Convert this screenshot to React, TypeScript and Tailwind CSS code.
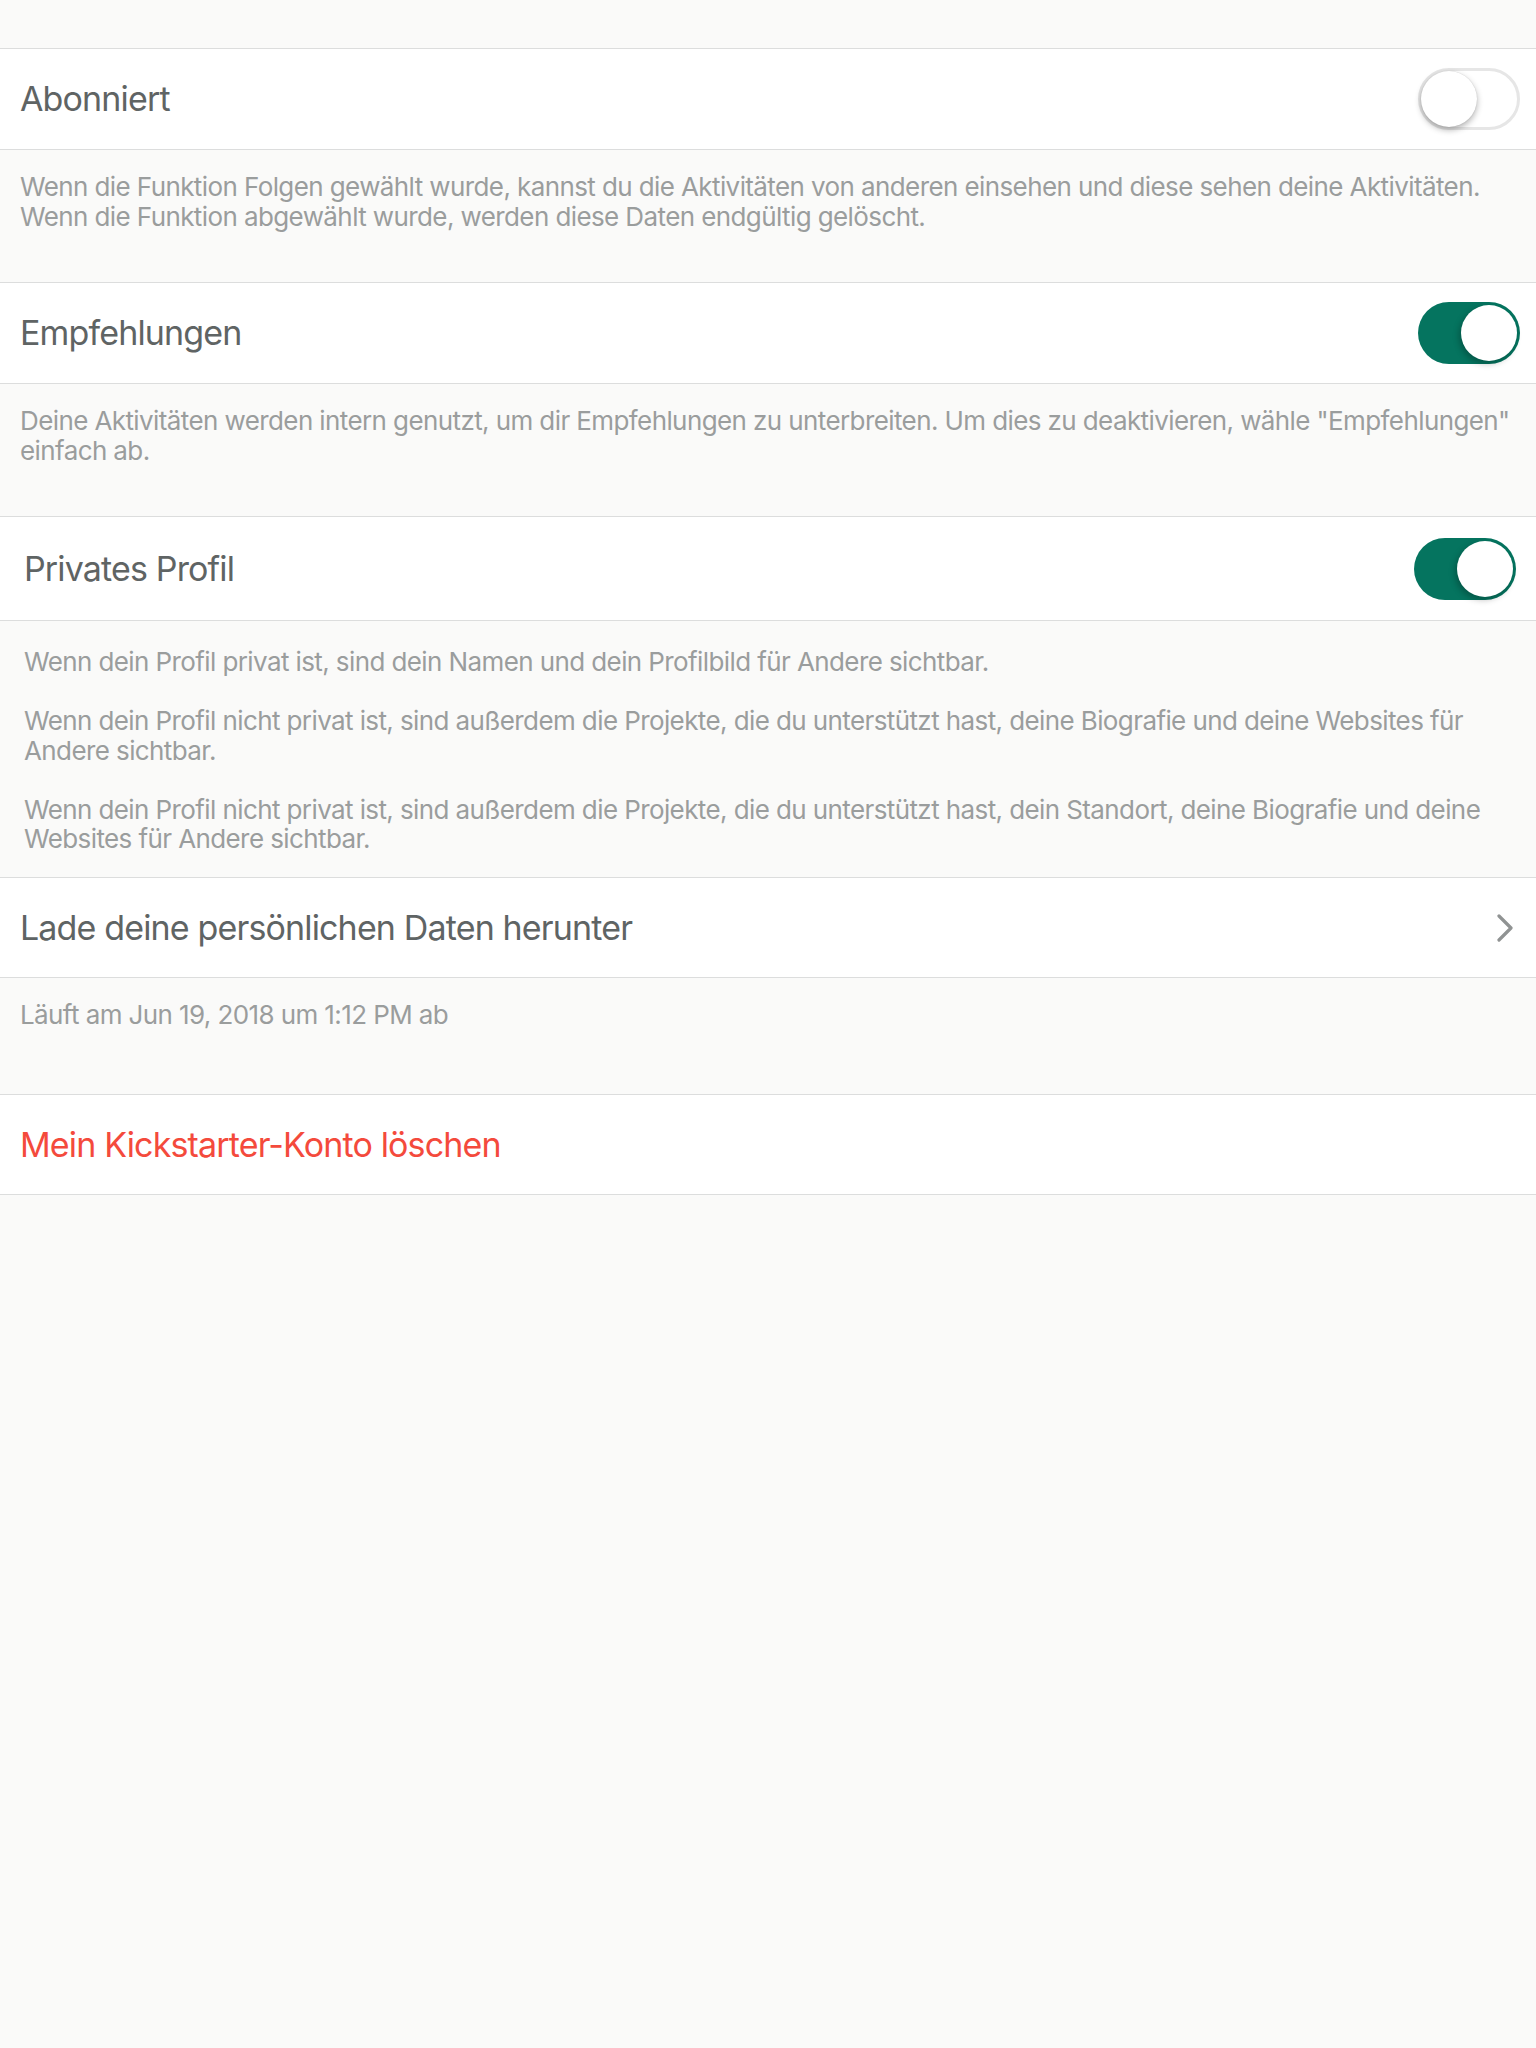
import React from 'react';

const font = { fontFamily: 'Inter, "Noto Sans", sans-serif' };

function Toggle({ on }: { on: boolean }) {
  if (on) {
    return (
      <div className="relative h-[62px] w-[102px] shrink-0 rounded-full bg-[#05745f]">
        <div className="absolute right-[3px] top-[3px] h-[56px] w-[56px] rounded-full bg-white shadow-[-2px_3px_6px_rgba(0,0,0,0.25)]" />
      </div>
    );
  }
  return (
    <div className="relative h-[62px] w-[102px] shrink-0 rounded-full border-[3px] border-[#e6e6e6] bg-white">
      <div className="absolute left-0 top-0 h-[56px] w-[56px] rounded-full bg-white shadow-[0_3px_6px_rgba(0,0,0,0.3),0_0_1px_rgba(0,0,0,0.2)]" />
    </div>
  );
}

function Row({
  title,
  children,
  className = '',
  red = false,
}: {
  title: string;
  children?: React.ReactNode;
  className?: string;
  red?: boolean;
}) {
  return (
    <div
      className={`flex items-center justify-between border-y border-[#dcdddd] bg-white ${className}`}
    >
      <span
        className={`text-[34px] leading-none tracking-[-0.85px] ${
          red ? 'text-[#f44a3c]' : 'text-[#5f6464]'
        }`}
      >
        {title}
      </span>
      {children}
    </div>
  );
}

const desc = 'text-[26px] leading-[29.5px] tracking-[-0.6px] text-[#9a9d9d]';

export default function App() {
  return (
    <div className="min-h-[2048px] w-full bg-[#fafaf9]" style={font}>
      <div className="h-[48px]" />

      {/* Abonniert */}
      <Row title="Abonniert" className="h-[102px] pl-[20px] pr-[16px]">
        <Toggle on={false} />
      </Row>
      <div className={`h-[132px] pl-[20px] pr-[16px] pt-[22px] ${desc}`}>
        <p>
          Wenn die Funktion Folgen gewählt wurde, kannst du die Aktivitäten von anderen einsehen und diese sehen deine Aktivitäten.
        </p>
        <p>Wenn die Funktion abgewählt wurde, werden diese Daten endgültig gelöscht.</p>
      </div>

      {/* Empfehlungen */}
      <Row title="Empfehlungen" className="h-[102px] pl-[20px] pr-[16px]">
        <Toggle on />
      </Row>
      <div className={`h-[132px] pl-[20px] pr-[16px] pt-[22px] ${desc}`}>
        <p>
          Deine Aktivitäten werden intern genutzt, um dir Empfehlungen zu unterbreiten. Um dies zu deaktivieren, wähle "Empfehlungen" einfach ab.
        </p>
      </div>

      {/* Privates Profil */}
      <Row title="Privates Profil" className="h-[105px] pl-[24px] pr-[20px]">
        <Toggle on />
      </Row>
      <div className={`h-[256px] pl-[24px] pr-[20px] pt-[26px] ${desc}`}>
        <p>Wenn dein Profil privat ist, sind dein Namen und dein Profilbild für Andere sichtbar.</p>
        <p className="mt-[29.5px]">
          Wenn dein Profil nicht privat ist, sind außerdem die Projekte, die du unterstützt hast, deine Biografie und deine Websites für Andere sichtbar.
        </p>
        <p className="mt-[29.5px]">
          Wenn dein Profil nicht privat ist, sind außerdem die Projekte, die du unterstützt hast, dein Standort, deine Biografie und deine Websites für Andere sichtbar.
        </p>
      </div>

      {/* Download */}
      <Row title="Lade deine persönlichen Daten herunter" className="h-[101px] pl-[20px] pr-[22px]">
        <svg width="17" height="28" viewBox="0 0 17 28" fill="none">
          <path d="M2 2 L14 14 L2 26" stroke="#909393" strokeWidth="3.2" strokeLinecap="round" strokeLinejoin="round" />
        </svg>
      </Row>
      <div className={`h-[116px] pl-[20px] pr-[16px] pt-[22px] ${desc}`}>
        <p>Läuft am Jun 19, 2018 um 1:12 PM ab</p>
      </div>

      {/* Delete */}
      <Row title="Mein Kickstarter-Konto löschen" red className="h-[101px] pl-[20px] pr-[16px]" />
    </div>
  );
}
